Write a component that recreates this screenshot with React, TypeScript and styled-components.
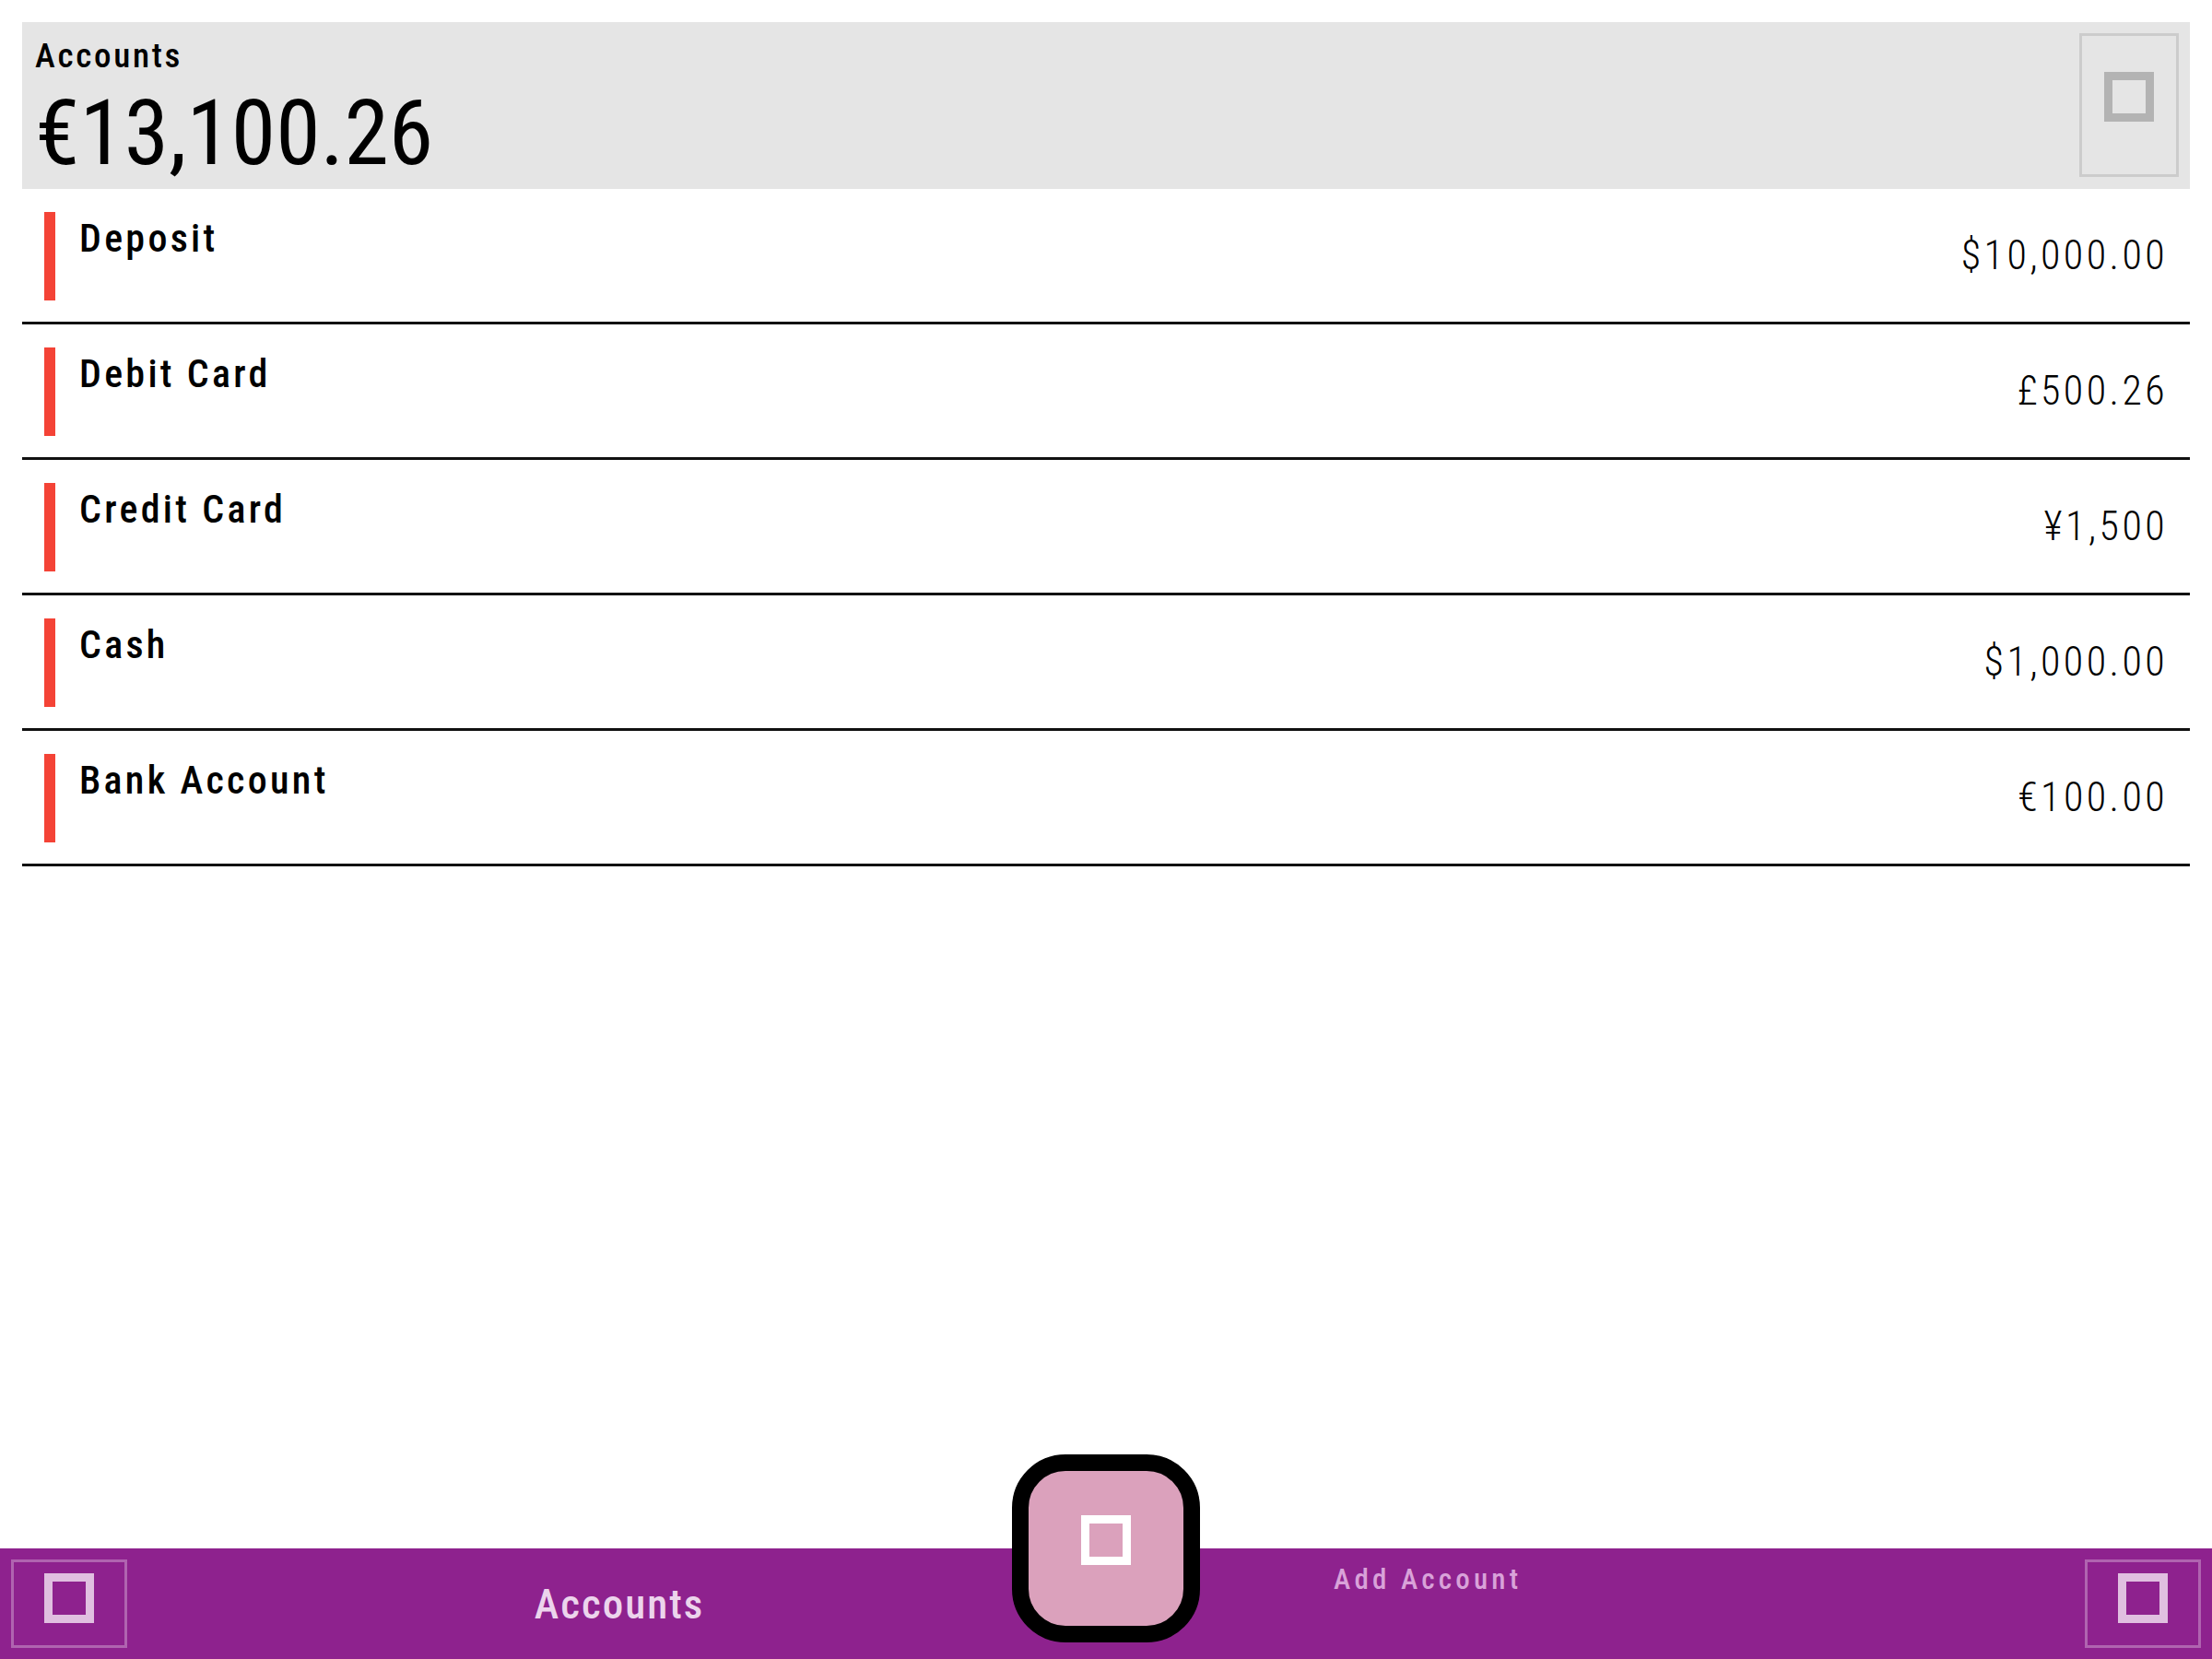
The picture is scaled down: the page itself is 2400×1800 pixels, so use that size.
import React from "react";
import styled, { createGlobalStyle } from "styled-components";

const GlobalStyle = createGlobalStyle`
  html, body {
    margin: 0;
    padding: 0;
    background: #ffffff;
    font-family: "Roboto Condensed", Roboto, "Liberation Sans", sans-serif;
    font-stretch: condensed;
  }
  #root {
    height: 1800px;
  }
`;

const Page = styled.div`
  position: relative;
  height: 1800px;
  display: flex;
  flex-direction: column;
  overflow: hidden;
`;

const Content = styled.main`
  flex: 1;
  padding: 24px 24px 0;
`;

const Summary = styled.header`
  display: flex;
  justify-content: space-between;
  align-items: stretch;
  height: 181px;
  box-sizing: border-box;
  padding: 12px 12px 13px 14px;
  background: #e5e5e5;
`;

const SummaryText = styled.div`
  display: flex;
  flex-direction: column;
  padding-top: 3px;
`;

const SummaryLabel = styled.span`
  font-size: 37px;
  font-weight: 500;
  letter-spacing: 2.7px;
  line-height: 44px;
  color: #000;
`;

const SummaryTotal = styled.span`
  font-size: 98px;
  font-weight: 400;
  line-height: 110px;
  margin-top: 7px;
  color: #000;
`;

const IconButton = styled.button<{ $tone: "grey" | "light" }>`
  width: ${(p) => (p.$tone === "grey" ? "108px" : "126px")};
  box-sizing: border-box;
  padding: 0;
  margin: 0;
  background: transparent;
  border: 3px solid ${(p) => (p.$tone === "grey" ? "#cccccc" : "rgba(255,255,255,0.3)")};
  display: flex;
  align-items: center;
  justify-content: center;
`;

const SquareGlyph = styled.span<{ $color: string; $lift?: number }>`
  display: block;
  width: 54px;
  height: 54px;
  box-sizing: border-box;
  border: 9px solid ${(p) => p.$color};
  margin-bottom: ${(p) => (p.$lift ?? 0) * 2}px;
`;

const List = styled.ul`
  list-style: none;
  margin: 0;
  padding: 0;
`;

const Row = styled.li`
  display: flex;
  align-items: center;
  padding: 25px 24px 23px 24px;
  border-bottom: 3px solid #111;
`;

const Marker = styled.span`
  width: 12px;
  height: 96px;
  flex: none;
  background: #f44336;
`;

const RowName = styled.span`
  align-self: flex-start;
  margin-left: 26px;
  margin-top: 4px;
  font-size: 42px;
  font-weight: 500;
  letter-spacing: 3.3px;
  line-height: 50px;
  color: #000;
`;

const RowAmount = styled.span`
  margin-left: auto;
  margin-bottom: 2px;
  font-size: 44px;
  font-weight: 350;
  letter-spacing: 3.4px;
  color: #000;
`;

const BottomBar = styled.nav`
  position: relative;
  height: 120px;
  display: grid;
  grid-template-columns: 150px 1fr 1fr 150px;
  align-items: center;
  background: #8e228e;
`;

const BarSide = styled.div<{ $align: "start" | "end" }>`
  display: flex;
  justify-content: ${(p) => (p.$align === "start" ? "flex-start" : "flex-end")};
  padding: 0 12px;
  height: 96px;
`;

const Tab = styled.div<{ $active?: boolean }>`
  height: 100%;
  box-sizing: border-box;
  display: flex;
  justify-content: ${(p) => (p.$active ? "center" : "flex-start")};
  align-items: ${(p) => (p.$active ? "center" : "flex-start")};
  padding-left: ${(p) => (p.$active ? "0" : "247px")};
  padding-top: ${(p) => (p.$active ? "0" : "15px")};
  padding-right: ${(p) => (p.$active ? "6px" : "0")};
  font-size: ${(p) => (p.$active ? "45px" : "31px")};
  font-weight: 500;
  letter-spacing: ${(p) => (p.$active ? "2px" : "4.2px")};
  color: ${(p) => (p.$active ? "#ecd4ec" : "#d9a2d9")};
`;

const Fab = styled.button`
  position: absolute;
  left: 50%;
  top: -102px;
  transform: translateX(-50%);
  width: 204px;
  height: 204px;
  box-sizing: border-box;
  padding: 0;
  border: 18px solid #000;
  border-radius: 58px;
  background: #dba1bc;
  display: flex;
  align-items: center;
  justify-content: center;
`;

const accounts = [
  { name: "Deposit", amount: "$10,000.00" },
  { name: "Debit Card", amount: "£500.26" },
  { name: "Credit Card", amount: "¥1,500" },
  { name: "Cash", amount: "$1,000.00" },
  { name: "Bank Account", amount: "€100.00" },
];

export default function App() {
  return (
    <>
      <GlobalStyle />
      <Page>
        <Content>
          <Summary>
            <SummaryText>
              <SummaryLabel>Accounts</SummaryLabel>
              <SummaryTotal>€13,100.26</SummaryTotal>
            </SummaryText>
            <IconButton $tone="grey">
              <SquareGlyph $color="#b3b3b3" $lift={9} />
            </IconButton>
          </Summary>
          <List>
            {accounts.map((a) => (
              <Row key={a.name}>
                <Marker />
                <RowName>{a.name}</RowName>
                <RowAmount>{a.amount}</RowAmount>
              </Row>
            ))}
          </List>
        </Content>
        <BottomBar>
          <BarSide $align="start">
            <IconButton $tone="light">
              <SquareGlyph $color="#e0bfe0" $lift={6} />
            </IconButton>
          </BarSide>
          <Tab $active>Accounts</Tab>
          <Tab>Add Account</Tab>
          <BarSide $align="end">
            <IconButton $tone="light">
              <SquareGlyph $color="#e0bfe0" $lift={6} />
            </IconButton>
          </BarSide>
          <Fab>
            <SquareGlyph $color="#ffffff" $lift={9} />
          </Fab>
        </BottomBar>
      </Page>
    </>
  );
}
